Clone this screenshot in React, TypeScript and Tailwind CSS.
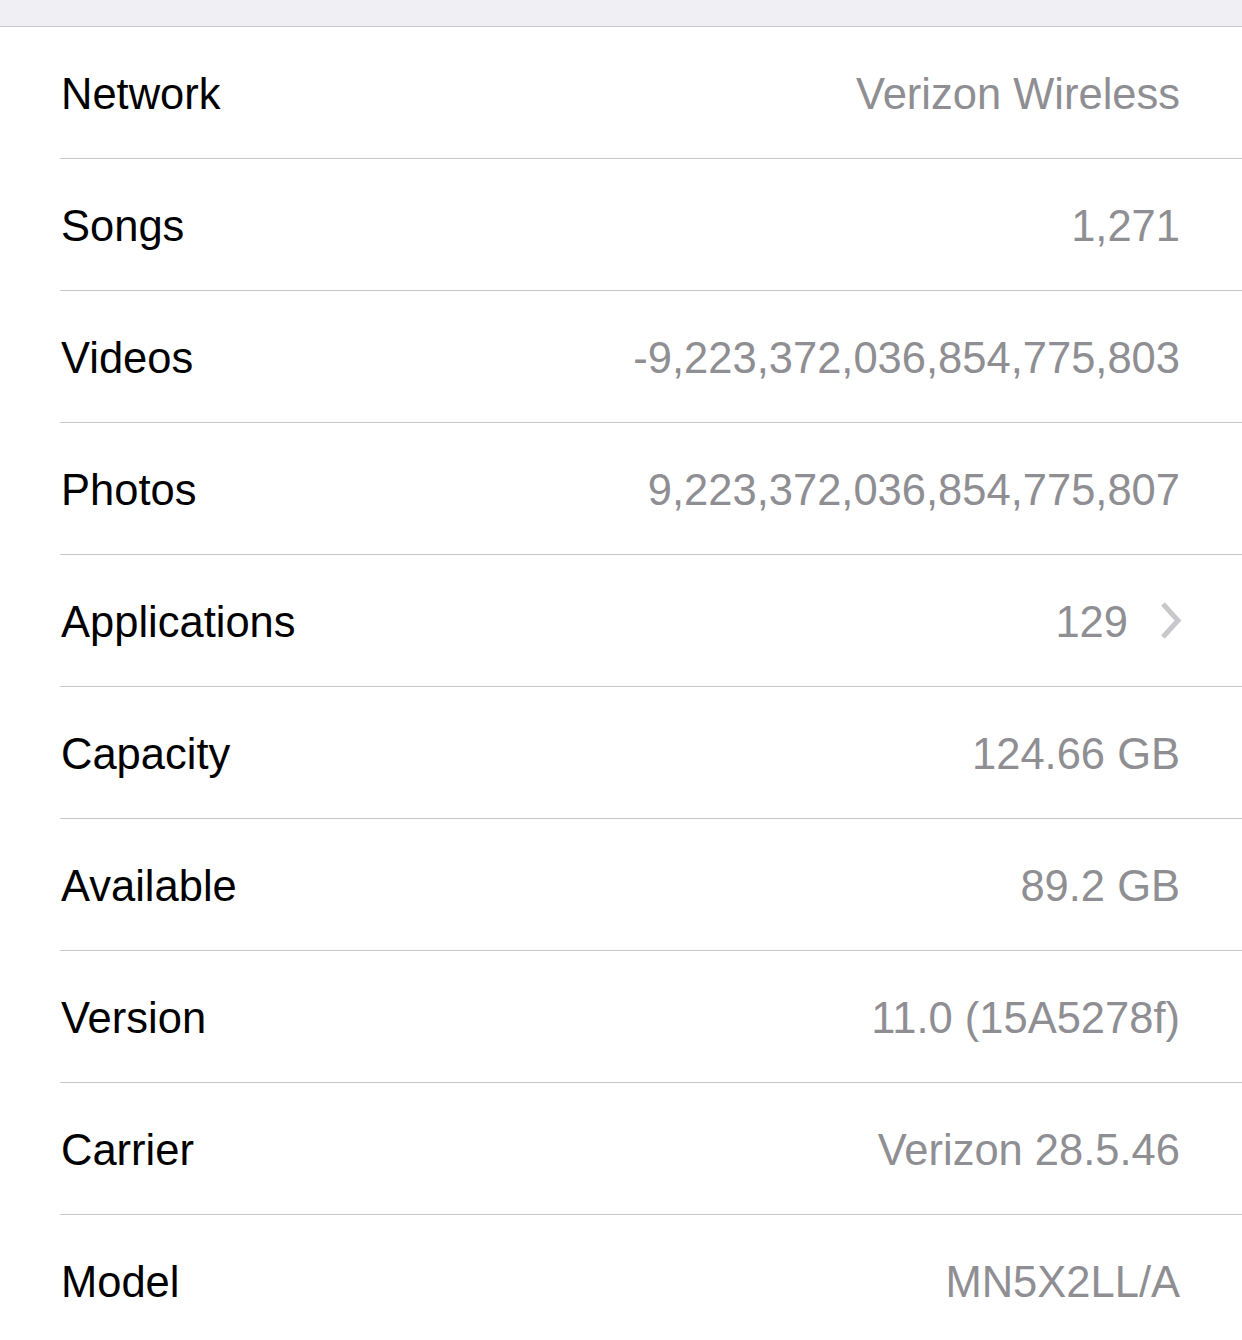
const rows: { label: string; value: string; chevron?: boolean }[] = [
  { label: 'Network', value: 'Verizon Wireless' },
  { label: 'Songs', value: '1,271' },
  { label: 'Videos', value: '-9,223,372,036,854,775,803' },
  { label: 'Photos', value: '9,223,372,036,854,775,807' },
  { label: 'Applications', value: '129', chevron: true },
  { label: 'Capacity', value: '124.66 GB' },
  { label: 'Available', value: '89.2 GB' },
  { label: 'Version', value: '11.0 (15A5278f)' },
  { label: 'Carrier', value: 'Verizon 28.5.46' },
  { label: 'Model', value: 'MN5X2LL/A' },
];

export default function App() {
  return (
    <div className="w-[1242px] h-[1340px] overflow-hidden bg-white font-['Liberation_Sans',Arial,sans-serif]">
      <div className="h-[27px] bg-[#efeff4] border-b border-[#c8c7cc]"></div>
      <div>
        {rows.map((r) => (
          <div key={r.label} className="pl-[60px]">
            <div className="h-[131px] flex items-center justify-between pt-[4px] pl-[1px] pr-[62px] text-[43.5px]">
              <span className="text-black">{r.label}</span>
              <span className="flex items-center text-[#8e8e93]">
                {r.value}
                {r.chevron && (
                  <svg width="26" height="40" viewBox="0 0 26 40" className="ml-[30px] -mr-[4px] -mt-[4px]">
                    <path d="M5 3 L20 19.5 L5 36" fill="none" stroke="#c7c7cc" strokeWidth="5" />
                  </svg>
                )}
              </span>
            </div>
            <div className="h-px bg-[#c8c7cc]"></div>
          </div>
        ))}
      </div>
    </div>
  );
}
